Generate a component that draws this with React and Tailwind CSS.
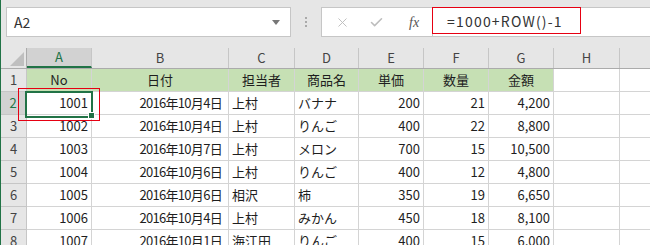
import React from "react";
import { X, Check } from "lucide-react";

const cols = [
  { key: "A", w: 65 },
  { key: "B", w: 137 },
  { key: "C", w: 66 },
  { key: "D", w: 64 },
  { key: "E", w: 65 },
  { key: "F", w: 65 },
  { key: "G", w: 65 },
  { key: "H", w: 66 },
  { key: "", w: 40 },
];

const header = ["No", "日付", "担当者", "商品名", "単価", "数量", "金額"];

const rows = [
  ["1001", "2016年10月4日", "上村", "バナナ", "200", "21", "4,200"],
  ["1002", "2016年10月4日", "上村", "りんご", "400", "22", "8,800"],
  ["1003", "2016年10月7日", "上村", "メロン", "700", "15", "10,500"],
  ["1004", "2016年10月6日", "上村", "りんご", "400", "12", "4,800"],
  ["1005", "2016年10月6日", "相沢", "柿", "350", "19", "6,650"],
  ["1006", "2016年10月4日", "上村", "みかん", "450", "18", "8,100"],
  ["1007", "2016年10月1日", "海江田", "りんご", "400", "15", "6,000"],
];

// left-aligned text columns
const textCols = [2, 3];

export default function App() {
  return (
    <div
      className="relative w-[650px] h-[245px] overflow-hidden bg-[#e6e6e6] border-l border-[#217346] text-[13px] text-[#1e1e1e]"
      style={{ fontFamily: '"Noto Sans CJK JP", "Liberation Sans", sans-serif' }}
    >
      {/* formula bar */}
      <div className="flex items-start pt-[7px] pl-[5px] h-[48px]">
        <div className="w-[285px] h-[30px] bg-white border border-[#c6c6c6] flex items-center justify-between pl-[7px] pr-[10px]">
          <span className="text-[14px] text-[#333]">A2</span>
          <span className="w-0 h-0 border-l-[4px] border-r-[4px] border-t-[5px] border-l-transparent border-r-transparent border-t-[#777]" />
        </div>
        <div className="w-[30px] h-[30px] flex flex-col items-center justify-center gap-[2px]">
          <span className="w-[2px] h-[2px] bg-[#aaa]" />
          <span className="w-[2px] h-[2px] bg-[#aaa]" />
          <span className="w-[2px] h-[2px] bg-[#aaa]" />
        </div>
        <div className="w-[111px] h-[30px] bg-white border border-[#c6c6c6] border-r-0 flex items-center pl-[13px]">
          <X size={15} strokeWidth={1.5} className="text-[#bdbdbd]" />
          <Check size={15} strokeWidth={2.5} className="text-[#bdbdbd] ml-[19px]" />
          <span
            className="ml-[25px] italic text-[14px] text-[#555]"
            style={{ fontFamily: '"Liberation Serif", serif' }}
          >
            fx
          </span>
        </div>
        <div className="flex-1 h-[30px] bg-white border border-[#c6c6c6] border-r-0 flex items-center pl-[14px] pb-[2px]">
          <span className="text-[14px] tracking-[1.2px] text-[#333]">=1000+ROW()-1</span>
        </div>
      </div>

      {/* column headers */}
      <div className="flex h-[21px] border-b border-[#ababab]">
        <div className="w-[26px] shrink-0 border-r border-[#ababab] flex items-end justify-end pr-[2px] pb-[2px]">
          <svg width="14" height="14" viewBox="0 0 14 14">
            <polygon points="14,0 14,14 0,14" fill="#bfbfbf" />
          </svg>
        </div>
        {cols.map((c, i) => (
          <div
            key={i}
            style={{ width: c.w }}
            className={
              "shrink-0 flex items-center justify-center border-r border-[#c6c6c6] " +
              (i === 0 ? "bg-[#d2d2d2] text-[#217346] border-b-2 border-b-[#217346]" : "text-[#444]")
            }
          >
            {c.key}
          </div>
        ))}
      </div>

      {/* body */}
      {[header, ...rows].map((r, ri) => (
        <div key={ri} className="flex h-[23px]">
          <div
            className={
              "w-[26px] shrink-0 flex items-center justify-center border-r border-b border-[#c6c6c6] " +
              (ri === 1 ? "bg-[#d2d2d2] text-[#217346] border-r-2 border-r-[#217346]" : "bg-[#e6e6e6] text-[#444]")
            }
          >
            {ri + 1}
          </div>
          {cols.map((c, ci) => {
            const v = r[ci];
            const isHead = ri === 0 && ci < 7;
            let align = "justify-end pr-[3px]";
            if (isHead) align = "justify-center";
            else if (textCols.includes(ci)) align = "justify-start pl-[3px]";
            else if (ci === 1) align = "justify-end pr-[6px] tracking-[-0.7px]";
            return (
              <div
                key={ci}
                style={{ width: c.w }}
                className={
                  "shrink-0 flex items-center border-r border-b border-[#d4d4d4] whitespace-nowrap " +
                  align +
                  (isHead ? " bg-[#c6e0b4]" : " bg-white")
                }
              >
                {v}
              </div>
            );
          })}
        </div>
      ))}

      {/* active cell */}
      <div className="absolute left-[24px] top-[91px] w-[68px] h-[27px] border-2 border-[#217346]" />
      <div className="absolute left-[87px] top-[112px] w-[7px] h-[7px] bg-[#217346] border border-white" />

      {/* red annotations */}
      <div className="absolute left-[17px] top-[88px] w-[82px] h-[33px] border border-[#e60012]" />
      <div className="absolute left-[431px] top-[7px] w-[149px] h-[27px] border border-[#e60012]" />
    </div>
  );
}
